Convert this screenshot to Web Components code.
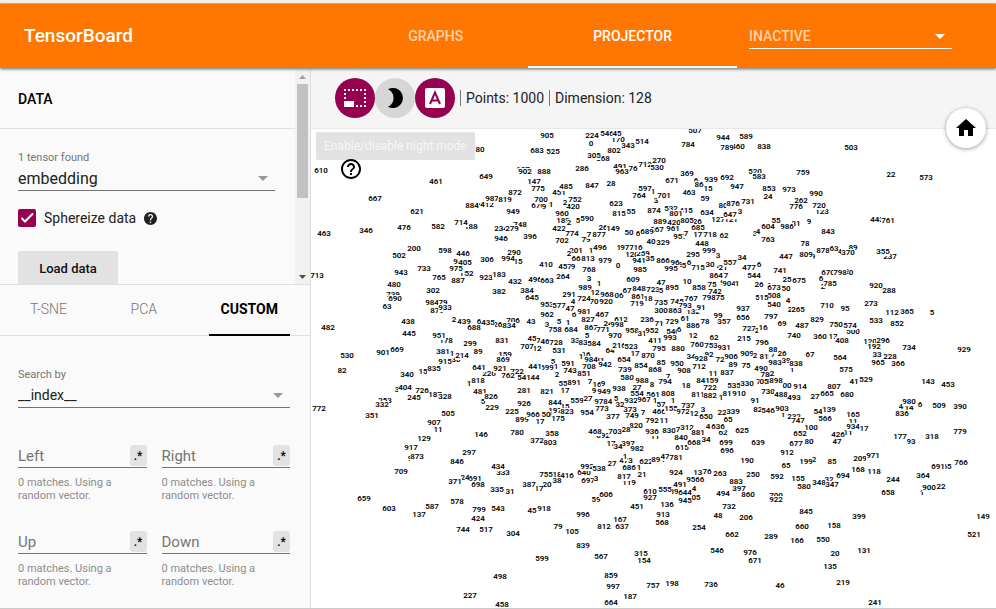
<!DOCTYPE html>
<html lang="en">
<head>
<meta charset="utf-8">
<title>TensorBoard</title>
<style>
html, body { height: 100%; margin: 0; }
body { font-family: Roboto, "Liberation Sans", sans-serif; background: #fff; color: #212121; overflow: hidden; }
</style>
</head>
<body>
<tb-app></tb-app>
<script>
const define = (name, html, setup) => {
  const template = document.createElement('template');
  template.innerHTML = '<style>*{box-sizing:border-box}button,input,select{font-family:inherit;margin:0}</style>' + html;
  customElements.define(name, class extends HTMLElement {
    constructor() {
      super();
      this.attachShadow({ mode: 'open' }).append(template.content.cloneNode(true));
    }
    connectedCallback() { if (setup) setup(this, this.shadowRoot); }
  });
};

/* Drop-down with an optional caption above it */
define('tb-select', `
<style>
:host { display: block; }
label { display: block; font-size: 11px; line-height: 16px; color: #757575; }
label:empty { display: none; }
.box { position: relative; border-bottom: 1px solid var(--line, #737373); }
select { display: block; width: 100%; height: 24px; padding: 0; border: 0; border-radius: 0; background: none;
  appearance: none; outline: 0; font-size: var(--size, 16px); font-weight: inherit; color: var(--ink, #212121); }
svg { position: absolute; right: 7px; top: 10px; width: 10px; height: 5px; fill: var(--arrow, #999); pointer-events: none; }
</style>
<label for="s"></label>
<div class="box"><select id="s"><option></option></select><svg viewBox="0 0 10 5"><path d="M0 0h10L5 5z"/></svg></div>`,
(el, root) => {
  root.querySelector('label').textContent = el.getAttribute('caption') || '';
  const option = root.querySelector('option');
  option.textContent = el.getAttribute('value');
  if (!el.hasAttribute('caption')) root.querySelector('select').setAttribute('aria-label', 'Dashboard');
});

define('tb-header', `
<style>
:host { display: flex; align-items: stretch; flex: none; height: 64px; background: #ff7700; color: #fff; position: relative;
  z-index: 2; box-shadow: 0 1px 3px rgba(0,0,0,.6); }
h1 { flex: 1; align-self: center; margin: 0; padding-left: 24px; font-size: 19px; line-height: 28px; font-weight: 500; }
nav { display: flex; }
button { border: 0; border-bottom: 2px solid transparent; border-top: 2px solid transparent; background: none; padding: 0 65px; font-size: 14px; font-weight: 500;
  color: #ffd2ab; }
button[aria-selected=true] { color: #fff; border-bottom-color: #fff; }
tb-select { align-self: center; flex: 0 0 203px; margin: 0 44px 0 12px; padding-top: 1px;
  --line: #fff; --ink: #ffd2ab; --arrow: #fff; --size: 14px; font-weight: 500; }
</style>
<h1>TensorBoard</h1>
<nav role="tablist">
  <button role="tab" aria-selected="false">GRAPHS</button>
  <button role="tab" aria-selected="true">PROJECTOR</button>
</nav>
<tb-select value="INACTIVE"></tb-select>`);

define('tb-scrollbar', `
<style>
:host { display: flex; flex-direction: column; align-items: center; flex: 0 0 15px; background: #f1f1f1; }
svg { flex: none; width: 7px; height: 4px; margin: 6px 0 5px; }
i { width: 11px; height: 114px; background: #c1c1c1; }
span { flex: 1; }
</style>
<svg viewBox="0 0 7 4"><path fill="#a3a3a3" d="M0 4h7L3.500 0z"/></svg><i></i><span></span>
<svg viewBox="0 0 7 4"><path fill="#505050" d="M0 0h7L3.500 4z"/></svg>`);

define('tb-data-panel', `
<style>
:host { display: flex; flex: none; height: 215px; overflow: hidden; }
.body { flex: 1; min-width: 0; }
h2 { margin: 0; padding: 1px 18px 0; font-size: 14px; line-height: 58px; font-weight: 500; color: #000; border-bottom: 1px solid #e0e0e0; }
.form { padding: 21px 20px 0 18px; }
.check { display: flex; align-items: center; margin-top: 17px; height: 20px; }
.tick { position: relative; display: flex; }
.tick input { width: 18px; height: 18px; appearance: none; background: #960050; border-radius: 2px; }
.tick svg { position: absolute; inset: 0; width: 18px; height: 18px; fill: none; stroke: #fff; stroke-width: 2; pointer-events: none; }
.check label { font-size: 14px; line-height: 20px; padding: 0 8px; }
.help { width: 13px; height: 13px; }
.load { margin-top: 23px; width: 100px; height: 34px; border: 0; border-radius: 2px; background: #e2e2e2; font-size: 13px; font-weight: 500; color: #111; }
</style>
<div class="body">
  <h2>DATA</h2>
  <div class="form">
    <tb-select caption="1 tensor found" value="embedding"></tb-select>
    <div class="check">
      <span class="tick"><input type="checkbox" id="sphere" checked><svg viewBox="0 0 18 18"><path d="M3.500 9l3.500 3.500L15 4.500"/></svg></span>
      <label for="sphere">Sphereize data</label>
      <svg class="help" viewBox="2 2 20 20"><path fill="#212121" d="M12 2C6.480 2 2 6.480 2 12s4.480 10 10 10 10-4.480 10-10S17.520 2 12 2zm1 17h-2v-2h2v2zm2.070-7.750l-.9.920C13.450 12.900 13 13.500 13 15h-2v-.5c0-1.100.45-2.100 1.170-2.830l1.240-1.260c.37-.36.59-.86.59-1.410 0-1.100-.9-2-2-2s-2 .9-2 2H8c0-2.210 1.790-4 4-4s4 1.790 4 4c0 .88-.36 1.680-.93 2.250z"/></svg>
    </div>
    <button class="load">Load data</button>
  </div>
</div>
<tb-scrollbar></tb-scrollbar>`);

/* Text box with a regular-expression toggle and a result line */
define('tb-vector-field', `
<style>
:host { display: block; min-width: 0; }
.row { display: flex; align-items: center; height: 24px; border-bottom: 1px solid #737373; }
input { flex: 1; min-width: 0; width: 0; height: 24px; padding: 0; border: 0; background: none; outline: 0; font-size: 15px; color: #212121; }
input::placeholder { color: #757575; opacity: 1; }
button { width: 17px; height: 21px; padding: 0; border: 0; border-radius: 3px; background: #e2e2e2; font-size: 12px; font-weight: 500; color: #000; }
p { margin: 8px 0 0; font-size: 11px; line-height: 13px; color: #8c8c8c; }
</style>
<div class="row"><input type="text"><button aria-label="Use regular expression">.*</button></div>
<p>0 matches. Using a<br>random vector.</p>`,
(el, root) => {
  const input = root.querySelector('input');
  input.placeholder = el.getAttribute('name');
  input.setAttribute('aria-label', el.getAttribute('name'));
});

define('tb-projection-panel', `
<style>
:host { display: block; flex: 1; border-top: 1px solid #e0e0e0; }
nav { display: flex; justify-content: space-between; height: 51px; padding: 0 20px 0 18px; border-bottom: 1px solid #e0e0e0; }
button { height: 51px; padding: 0 12px 2px; border: 0; border-bottom: 2px solid transparent; background: none; font-size: 14px; font-weight: 300; color: #757575; }
button[aria-selected=true] { font-weight: 700; color: #000; border-bottom-color: #000; }
.form { padding: 31px 20px 0 18px; --size: 14px; }
.grid { display: grid; grid-template-columns: 1fr 1fr; gap: 28px 15px; margin-top: 36px; }
</style>
<nav role="tablist">
  <button role="tab">T-SNE</button><button role="tab">PCA</button><button role="tab" aria-selected="true">CUSTOM</button>
</nav>
<div class="form">
  <tb-select caption="Search by" value="__index__"></tb-select>
  <div class="grid">
    <tb-vector-field name="Left"></tb-vector-field><tb-vector-field name="Right"></tb-vector-field>
    <tb-vector-field name="Up"></tb-vector-field><tb-vector-field name="Down"></tb-vector-field>
  </div>
</div>`);

define('tb-toolbar', `
<style>
:host { display: flex; align-items: center; flex: none; height: 60px; padding: 0 0 1px 24px; background: #f5f5f5; border-bottom: 1px solid #e8e8e8; }
button { display: flex; align-items: center; justify-content: center; width: 40px; height: 40px; padding: 0; border: 0; border-radius: 50%; background: #960050; color: #fff; }
button.off { background: #d6d6d6; color: #000; }
svg { width: 24px; height: 24px; }
span { display: block; margin-left: 5px; padding-left: 5px; border-left: 1px solid #777; font-size: 14px; line-height: 16px; }
</style>
<button aria-label="Select by area" aria-pressed="true"><svg viewBox="0 0 24 24" fill="currentColor"><path d="M1 3h2v2H1zM5 3h2v2H5zM9 3h2v2H9zM13 3h2v2h-2zM17 3h2v2h-2zM21 3h2v2h-2zM1 7h2v2H1zM21 7h2v2h-2zM1 11h2v2H1zM21 11h2v2h-2zM21 15h2v2h-2zM13 19h2v2h-2zM17 19h2v2h-2zM21 19h2v2h-2zM1 15h10v6H1z"/></svg></button>
<button class="off" aria-label="Night mode"><svg viewBox="0 0 24 24" fill="currentColor"><path d="M5 3.300A10 10 0 1 1 5 20.700A9.600 9.600 0 0 0 5 3.300z"/></svg></button>
<button aria-label="3D labels" aria-pressed="true"><svg viewBox="0 0 24 24"><rect x="2" y="2" width="20" height="20" rx="2" fill="#fff"/><path fill="none" stroke="#960050" stroke-width="2" d="M7 18L12 6.500 17 18M8.500 14.500h7"/></svg></button>
<span>Points: 1000</span><span>Dimension: 128</span>`);

/* Labels of the projected points. Each sector holds an origin in pixels and, in thirds of a pixel
   from that origin, "label x y" triples; labels listed later lie in front. */
const SECTORS = [
[-1, -4, `107 640 134 676 684 244 4 512 238 412 532 240 186 482 306 748 630 301 234 572 312 290 613 384 15 625 411 944 450 412 152 469 447
739 250 510 879 382 557 2 433 585 6 508 590 263 570 600 706 608 588 178 408 648 159 585 689 30 437 706 1 425 686 12 681 673
80 511 75 683 682 77 610 34 137 461 378 171 649 527 155 902 646 142 888 703 142 147 673 172 775 685 192 872 615 203 987 545 223 819 585 226
884 485 243 700 694 225 949 608 262 667 196 222 621 322 261 463 42 327 346 169 317 476 281 308 582 383 305 714 453 293 88 488 306 279 607 312
946 573 342 396 661 336 200 313 373 502 267 393 598 405 377 446 459 387 405 466 413 975 437 432 306 530 406 994 593 402 733 343 432 943 274 445
713 20 453 765 388 459 887 443 468 52 476 447 923 528 459 183 567 449 432 614 471 496 676 465 480 253 480 302 370 499 382 566 501 384 650 497
645 666 520 690 254 522 63 230 547 984 365 534 79 400 534 933 404 550 438 295 592 445 298 627 482 53 609 530 111 692 901 220 685 669 262 676
439 463 591 688 493 608 435 534 594 834 597 602 43 662 592 951 386 633 299 481 657 89 505 681 831 576 649 45 666 643 746 698 649 707 651 667
381 400 681 214 455 693 869 580 705 915 405 712`],
[229, -4, `170 235 46 546 201 27 270 358 108 491 240 127 520 646 140 460 593 66 451 58 205 420 98 245 189 68 287 343 265 62 368 188 102
120 275 391 259 310 387 201 107 379 532 394 251 420 403 293 326 465 290 127 533 284 121 572 286 267 350 316 6 293 328 26 190 308 5 114 288 2 76 235
9 11 246 1 32 240 79 138 345 7 146 330 3 347 227 1 338 200 4 435 203 15 505 191 80 548 243 3 645 326 3 600 260 1 152 378 12 243 368 2 88 388
9 424 420 96 405 413 4 537 427 21 548 430 5 433 424 6 446 414 6 467 167 171 480 331
905 22 33 525 40 81 224 157 33 45 231 27 0 153 56 514 306 50 802 221 77 305 161 93 286 127 132 28 214 178 847 155 183 712 316 120 530 352 129
76 280 131 963 247 141 507 465 18 784 444 61 944 550 38 589 617 36 789 560 69 838 672 66 583 658 156 369 442 148 671 396 167 692 560 160
939 514 166 947 592 185 86 478 180 485 77 187 752 105 224 623 227 238 590 141 283 815 236 268 55 273 260 597 316 191 764 298 213 701 371 213
63 452 203 59 495 221 960 65 267 2 88 293 422 58 312 774 97 326 702 67 349 877 176 331 149 218 311 874 341 257 415 438 258 801 408 268
889 361 292 805 440 289 685 473 309 634 502 265 731 625 230 876 579 238 647 570 271 50 268 325 689 320 322 961 398 313 957 419 336 7 438 326
718 511 330 62 552 332 448 485 356 40 334 350 329 370 354 4 655 320 496 180 370 977 262 368 16 295 370 66 107 401 813 143 403 979 196 408
0 235 424 410 18 419 457 74 426 9 98 426 768 146 434 264 68 456 663 22 468 3 147 461 1 177 476 941 298 409 985 300 434 866 368 409 35 331 401
995 394 431 609 279 466 47 363 475 10 440 470 999 506 379 295 460 391 3 534 393 715 474 430 30 511 419 557 569 413 34 605 399 477 626 429
6 657 419 864 528 452 7 558 452 544 642 452 904 560 475`],
[229, 151, `920 198 66 719 292 72 300 362 92 132 460 96 540 400 155 712 477 262 722 510 325 17 285 222 773 185 386 373 270 391 825 660 391 4 100 65
70 162 67 742 524 35 24 203 132 5 57 126 3 20 136 34 452 231 92 508 226 2 52 286 27 290 325 5 140 168 7 385 290 1 542 354 73 680 332 892 190 468
62 550 458 11 345 472 6 101 104 6 418 151 197 45 393 16 138 225 7 150 305 17 75 333 15 75 380 22 545 400 1 400 362 41 180 242 1 85 130 5 40 245
989 134 23 1 177 12 968 201 46 06 236 48 67 262 34 848 298 26 723 338 31 5 364 34 895 397 23 858 478 24 75 515 15 904 566 11 1 592 12
26 657 14 6 688 18 515 665 53 291 87 46 12 165 38 724 133 58 861 295 51 18 325 56 735 363 69 745 411 65 767 454 57 798 506 53 75 540 53
793 434 77 91 483 84 863 405 93 953 20 76 577 58 77 47 91 86 981 132 95 467 186 104 962 22 105 827 145 121 612 243 120 998 232 136
236 322 121 71 356 131 729 395 125 61 436 116 886 460 138 78 494 127 99 535 107 357 551 126 937 610 88 656 610 114 7 680 110 727 626 147
2 650 152 16 670 146 758 44 149 684 92 151 867 152 143 771 190 150 970 226 168 958 275 153 31 305 163 952 335 153 993 391 174 411 345 182
12 458 169 62 523 173 215 613 178 796 667 190 46 15 186 728 47 190 33 106 183 83 130 188 584 163 191 64 209 212 216 238 198 523 272 202
795 356 207 880 415 207 760 470 195 753 512 198 931 553 204 531 57 213 1 122 231 984 152 239 942 196 254 654 251 241 870 325 229 85 363 249
854 303 257 868 345 269 739 255 269 950 412 251 928 482 238 72 540 239 906 573 230 909 620 223 2 645 227 81 676 232 699 20 265 1 47 262
591 83 252 743 89 272 708 147 262 851 133 282 908 432 273 89 578 256 75 617 258 490 664 268 837 561 278 11 519 283 78 678 286 580 261 294
988 307 303 8 335 314 794 374 305 18 439 318 841 490 304 59 523 304 535 582 318 330 621 311 705 670 307 55 70 311 891 102 309 16 170 314
9 189 312 821 22 336 9 161 334 949 193 336 938 238 326 554 290 343 561 340 344 808 383 342 811 473 345 882 510 349 81 560 342 910 598 343
844 44 369 559 110 362 27 144 358 978 183 365 4 211 367 5 227 356 32 240 374 932 273 363 967 311 361 1 345 364 57 362 375 737 445 377 91 645 362
823 82 397 954 140 400 377 219 411 749 277 409 7 308 400 466 356 396 155 393 387 972 429 396 12 462 401 3 489 391 339 578 397 650 498 412
65 565 419 792 336 423 11 372 423 50 22 404 175 55 418 820 288 439 28 257 450 703 226 455 468 166 457 936 335 457 830 388 452 7 414 450
312 440 443 881 473 460 636 534 442 4 503 440 625 607 453 840 424 473 358 36 461`],
[229, 301, `17 212 42 397 265 42 473 258 93 610 330 187 119 268 158 640 132 130 154 311 393 671 644 393 167 240 270 134 480 128 27 217 102 7 5 180
18 50 134 39 403 187 397 598 178 20 20 165 1 254 80
2 8 33 803 30 38 34 233 52 982 291 57 615 427 54 668 461 39 34 498 31 699 558 39 639 654 39 696 562 64 992 141 111 538 178 118 622 317 96
894 354 90 47 375 80 781 409 83 190 620 93 755 18 134 416 82 138 38 50 152 697 144 153 3 169 147 686 266 113 1 297 114 817 253 140
21 305 135 924 407 130 76 502 125 263 539 132 956 458 149 6 485 149 491 420 165 4 461 176 250 639 136 883 587 155 555 374 180 644 435 189
05 467 204 945 436 213 927 330 205 494 548 193 860 625 196 59 168 210 606 199 194 451 290 231 136 382 225 732 566 231 996 130 255 637 246 291
812 192 292 568 367 280 913 368 254 254 477 293 48 534 259 206 619 263 662 577 316 79 53 290 105 95 306 839 129 349 567 184 380 315 304 371
546 532 362 976 631 370 859 214 437 997 220 471 757 339 468 198 395 461 187 271 502 736 514 466 664 213 519`],
[449, -4, `123 185 262 262 124 229 443 350 286 89 279 369 500 278 622 120 330 652 237 391 397 508 43 514 33 350 690 31 109 298 17 220 637 4 240 380
9 160 395 25 82 466 15 12 518 2 90 556 2 190 485 7 40 690 2 260 440
503 272 68 759 128 145 22 394 150 573 499 158 853 28 192 973 88 196 24 23 217 990 169 208 776 107 246 720 176 243 55 47 287 9 147 290
604 23 306 986 82 305 763 23 345 843 205 320 78 134 356 761 384 287 878 188 377 63 221 372 370 265 384 809 137 391 447 78 397 355 370 380
741 61 437 675 116 468 673 41 489 50 78 493 670 205 445 798 239 443 0 272 444 6 182 463 785 209 477 540 41 541 4 84 528 265 114 555
797 34 575 69 67 596 487 125 604 740 103 634 16 8 610 710 202 543 95 255 552 829 172 585 750 229 600 574 269 603 360 181 636 408 247 649
920 348 483 288 386 498 273 332 537 112 395 565 365 442 562 5 517 564 533 348 589 852 410 598 296 370 648 192 342 667 734 446 669 929 612 676
228 391 696 96 12 655 88 40 674 26 67 687 67 150 689 564 240 698 81 12 695 39 78 708`],
[449, 231, `05 12 67 00 82 77 665 202 103 54 175 157 232 103 170 700 47 407 47 232 246 209 300 297 11 265 220 11 280 186 14 448 145 32 208 360
1 95 30 1 70 166 1 485 398 80 146 246 22 542 381 65 562 321 2 163 301 2 35 42 78 15 45 4 424 142 592 50 351
983 46 8 838 109 11 965 354 10 366 414 12 575 259 31 898 49 63 914 119 82 730 25 95 488 63 105 493 101 115 27 166 111 680 260 106
807 222 80 41 282 67 529 317 60 143 503 66 453 563 76 6 479 135 980 446 127 836 426 163 509 538 139 390 599 142 546 24 152 903 67 148
747 113 184 139 208 151 566 196 177 165 280 165 934 278 202 17 311 208 426 233 226 100 153 203 652 121 222 677 109 252 912 82 280 65 78 318
199 138 306 85 215 306 971 340 288 168 294 331 118 341 335 694 248 347 155 115 356 580 132 380 348 176 368 347 216 375 93 452 246 177 421 231
318 517 231 779 601 216 766 602 309 691 535 322 364 488 349 244 398 360 658 383 399 900 506 384 922 47 420 845 139 455 399 296 471
660 126 502 158 222 499 149 670 470 521 643 525 289 34 530 166 112 543 550 190 541 20 225 582 131 313 573 135 210 621 219 248 669
46 61 677 241 344 730`],
[-1, 231, `226 537 41 722 620 37 253 224 122 229 545 143 691 495 357 333 578 338 11 383 209 24 464 354 9 299 298 3 260 89 187 375 105 5 519 125
899 635 180 17 688 388 15 338 37 45 667 453 17 690 185 1 477 72 481 510 95
82 97 34 340 291 45 835 371 27 641 506 23 921 569 28 762 594 48 441 675 22 541 642 54 44 676 54 818 503 64 826 544 111 281 641 94
926 643 132 225 605 155 966 670 166 50 707 165 404 285 83 726 336 92 328 405 111 245 312 115 332 217 135 772 26 148 351 187 169
505 415 163 907 373 190 129 341 236 146 512 226 780 620 218 372 682 243 917 302 264 873 321 291 297 477 279 846 442 305 709 273 337
434 563 320 371 435 367 698 503 375 335 562 390 31 599 396 387 658 375 659 163 416 603 238 447 137 326 464 587 366 442 578 442 426
799 506 450 424 503 476 543 565 447 918 702 448 744 460 510 517 529 509 304 608 522 599 697 597 498 569 650 227 481 708 458 575 736`]
];

define('tb-point-cloud', `
<style>
:host { display: block; position: relative; overflow: hidden; background: #fff; }
span { position: absolute; transform: translate(-50%, -50%); background: #fff; color: #000; font-size: 8px; line-height: 8px; font-weight: 600; }
</style>`,
(el, root) => {
  if (root.querySelector('span')) return;
  for (const [left, top, text] of SECTORS) {
    const words = text.trim().split(/\s+/);
    for (let i = 0; i < words.length; i += 3) {
      const label = document.createElement('span');
      label.textContent = words[i];
      label.style.left = Math.round(left + words[i + 1] / 3) + 'px';
      label.style.top = Math.round(top + words[i + 2] / 3) + 'px';
      root.append(label);
    }
  }
});

define('tb-projector', `
<style>
:host { display: flex; flex-direction: column; flex: 1; min-width: 0; position: relative; }
tb-point-cloud { flex: 1; }
.tip { position: absolute; left: 5px; top: 63px; padding: 0 8px; border-radius: 2px; background: #e2e2e2; color: #f7f7f7; font-size: 12px; line-height: 28px; }
.info { position: absolute; left: 28px; top: 88px; width: 24px; height: 24px; padding: 0; border: 0; background: none; }
.info svg, .home svg { display: block; width: 24px; height: 24px; }
.home { position: absolute; right: 10px; top: 39px; width: 40px; height: 40px; padding: 8px; border: 0; border-radius: 50%; background: #fff;
  box-shadow: 0 1px 4px rgba(0,0,0,.4); }
</style>
<tb-toolbar></tb-toolbar>
<tb-point-cloud></tb-point-cloud>
<div class="tip" role="tooltip">Enable/disable night mode</div>
<button class="info" aria-label="Help"><svg viewBox="0 0 24 24"><path d="M11 18h2v-2h-2v2zm1-16C6.480 2 2 6.480 2 12s4.480 10 10 10 10-4.480 10-10S17.520 2 12 2zm0 18c-4.410 0-8-3.590-8-8s3.590-8 8-8 8 3.590 8 8-3.590 8-8 8zm0-14c-2.210 0-4 1.790-4 4h2c0-1.100.9-2 2-2s2 .9 2 2c0 2-3 1.750-3 5h2c0-2.250 3-2.500 3-5 0-2.210-1.790-4-4-4z"/></svg></button>
<button class="home" aria-label="Reset view"><svg viewBox="0 0 24 24"><path d="M10 20v-6h4v6h5v-8h3L12 3 2 12h3v8z"/></svg></button>`);

define('tb-app', `
<style>
:host { display: flex; flex-direction: column; height: 100vh; box-sizing: border-box; border-top: 3px solid #f1f1f1; border-bottom: 1px solid #ccc; }
.edge { flex: none; height: 1px; background: #c4c4c4; }
main { display: flex; flex: 1; min-height: 0; padding-top: 1px; background: #f5f5f5; }
aside { display: flex; flex-direction: column; flex: 0 0 311px; background: #fafafa; border-right: 1px solid #ddd; overflow: hidden; }
</style>
<div class="edge"></div>
<tb-header></tb-header>
<main>
  <aside><tb-data-panel></tb-data-panel><tb-projection-panel></tb-projection-panel></aside>
  <tb-projector></tb-projector>
</main>`);
</script>
</body>
</html>
